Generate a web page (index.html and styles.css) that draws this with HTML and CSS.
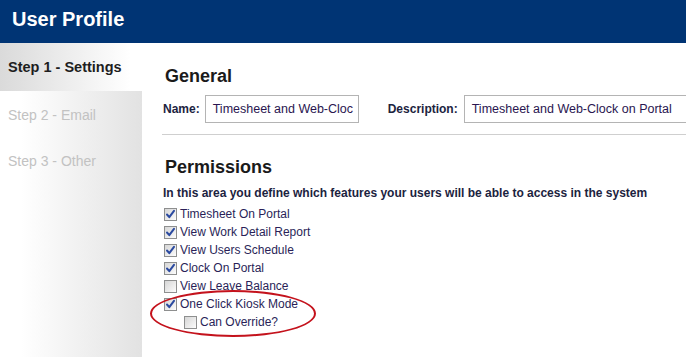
FILE: index.html
```html
<!DOCTYPE html>
<html>
<head>
<meta charset="utf-8">
<link rel="stylesheet" href="styles.css">
</head>
<body>
<header class="topbar"><h1 class="title">User Profile</h1></header>
<div class="layout">
  <nav class="sidebar">
    <div class="step active">Step 1 - Settings</div>
    <div class="rest">
      <div class="step">Step 2 - Email</div>
      <div class="step">Step 3 - Other</div>
    </div>
  </nav>
  <main class="main">
    <h2 class="section">General</h2>
    <div class="fields">
      <label class="lbl">Name:</label>
      <div class="input name">Timesheet and Web-Cloc</div>
      <label class="lbl desc-lbl">Description:</label>
      <div class="input desc">Timesheet and Web-Clock on Portal</div>
    </div>
    <div class="rule"></div>
    <h2 class="section perm">Permissions</h2>
    <p class="intro">In this area you define which features your users will be able to access in the system</p>
    <ul class="checks">
      <li><span class="cb on"><svg viewBox="0 0 11 11"><path d="M2 5.5 L4.3 8.2 L9 1.8" /></svg></span>Timesheet On Portal</li>
      <li><span class="cb on"><svg viewBox="0 0 11 11"><path d="M2 5.5 L4.3 8.2 L9 1.8" /></svg></span>View Work Detail Report</li>
      <li><span class="cb on"><svg viewBox="0 0 11 11"><path d="M2 5.5 L4.3 8.2 L9 1.8" /></svg></span>View Users Schedule</li>
      <li><span class="cb on"><svg viewBox="0 0 11 11"><path d="M2 5.5 L4.3 8.2 L9 1.8" /></svg></span>Clock On Portal</li>
      <li><span class="cb"></span>View Leave Balance</li>
      <li><span class="cb on"><svg viewBox="0 0 11 11"><path d="M2 5.5 L4.3 8.2 L9 1.8" /></svg></span>One Click Kiosk Mode</li>
      <li class="sub"><span class="cb"></span>Can Override?</li>
    </ul>
    <div class="ellipse"></div>
  </main>
</div>
</body>
</html>
```
FILE: styles.css
```css
* { box-sizing: border-box; }
html, body { margin: 0; padding: 0; }
body {
  width: 686px;
  height: 357px;
  overflow: hidden;
  font-family: "Liberation Sans", Arial, sans-serif;
  background: #fff;
}
.topbar {
  height: 43px;
  background: #003474;
  padding-left: 12px;
  display: flex;
  align-items: center;
}
.title {
  margin: 0;
  color: #fff;
  font-size: 20px;
  font-weight: bold;
  line-height: 1;
  padding-bottom: 5px;
}
.layout {
  display: flex;
  height: 314px;
}
.sidebar {
  width: 142px;
  flex: none;
  display: flex;
  flex-direction: column;
}
.step {
  padding-left: 8px;
  font-size: 14px;
  color: #c2c2c2;
  height: 46px;
  line-height: 46px;
}
.step.active {
  height: 48px;
  line-height: 48px;
  font-size: 14.5px;
  font-weight: bold;
  color: #1e1e1e;
  background: linear-gradient(to right, #dadada 0%, #ffffff 92%);
}
.rest {
  flex: 1;
  background: linear-gradient(to right, #ffffff 15%, #e2e2e2 100%);
  padding-top: 1px;
}
.main {
  flex: 1;
  min-width: 0;
  overflow: hidden;
  position: relative;
  padding-left: 21px;
  padding-top: 23px;
}
.section {
  margin: 0 0 0 2px;
  font-size: 18px;
  font-weight: bold;
  color: #1a1a1a;
  line-height: 20px;
}
.fields {
  display: flex;
  align-items: center;
  margin-top: 9px;
}
.lbl {
  font-size: 12px;
  font-weight: bold;
  color: #1c2340;
  flex: none;
}
.input {
  height: 28px;
  border: 1px solid #b4b4b4;
  font-size: 12.5px;
  line-height: 26px;
  color: #2a1650;
  padding-left: 7px;
  white-space: nowrap;
  overflow: hidden;
  flex: none;
}
.input.name {
  width: 154px;
  margin-left: 5px;
}
.desc-lbl { margin-left: 29px; }
.input.desc {
  margin-left: 6px;
  width: 250px;
}
.rule {
  height: 1px;
  background: #cfcfcf;
  margin-top: 11px;
  margin-left: -1px;
}
.section.perm { margin-top: 22px; }
.intro {
  margin: 9px 0 0 0;
  font-size: 12px;
  font-weight: bold;
  color: #1c2340;
  line-height: 15px;
}
.checks {
  list-style: none;
  margin: 4px 0 0 0;
  padding: 0;
}
.checks li {
  display: flex;
  align-items: center;
  height: 18px;
  font-size: 12px;
  color: #2a1f58;
}
.checks li.sub { padding-left: 20px; }
.cb {
  width: 13px;
  height: 13px;
  border: 1px solid #8e8f8f;
  background: linear-gradient(135deg, #d6d6d6 0%, #f4f4f4 80%, #ffffff 100%);
  margin-left: 1px;
  margin-right: 3px;
  display: flex;
  align-items: center;
  justify-content: center;
  flex: none;
}
.cb svg { width: 11px; height: 11px; }
.cb svg path {
  fill: none;
  stroke: #2b4aa0;
  stroke-width: 2;
  stroke-linecap: round;
  stroke-linejoin: round;
}
.ellipse {
  position: absolute;
  left: 8px;
  top: 247px;
  width: 166px;
  height: 47px;
  border: 2px solid #c4121c;
  border-radius: 50%;
}
```
